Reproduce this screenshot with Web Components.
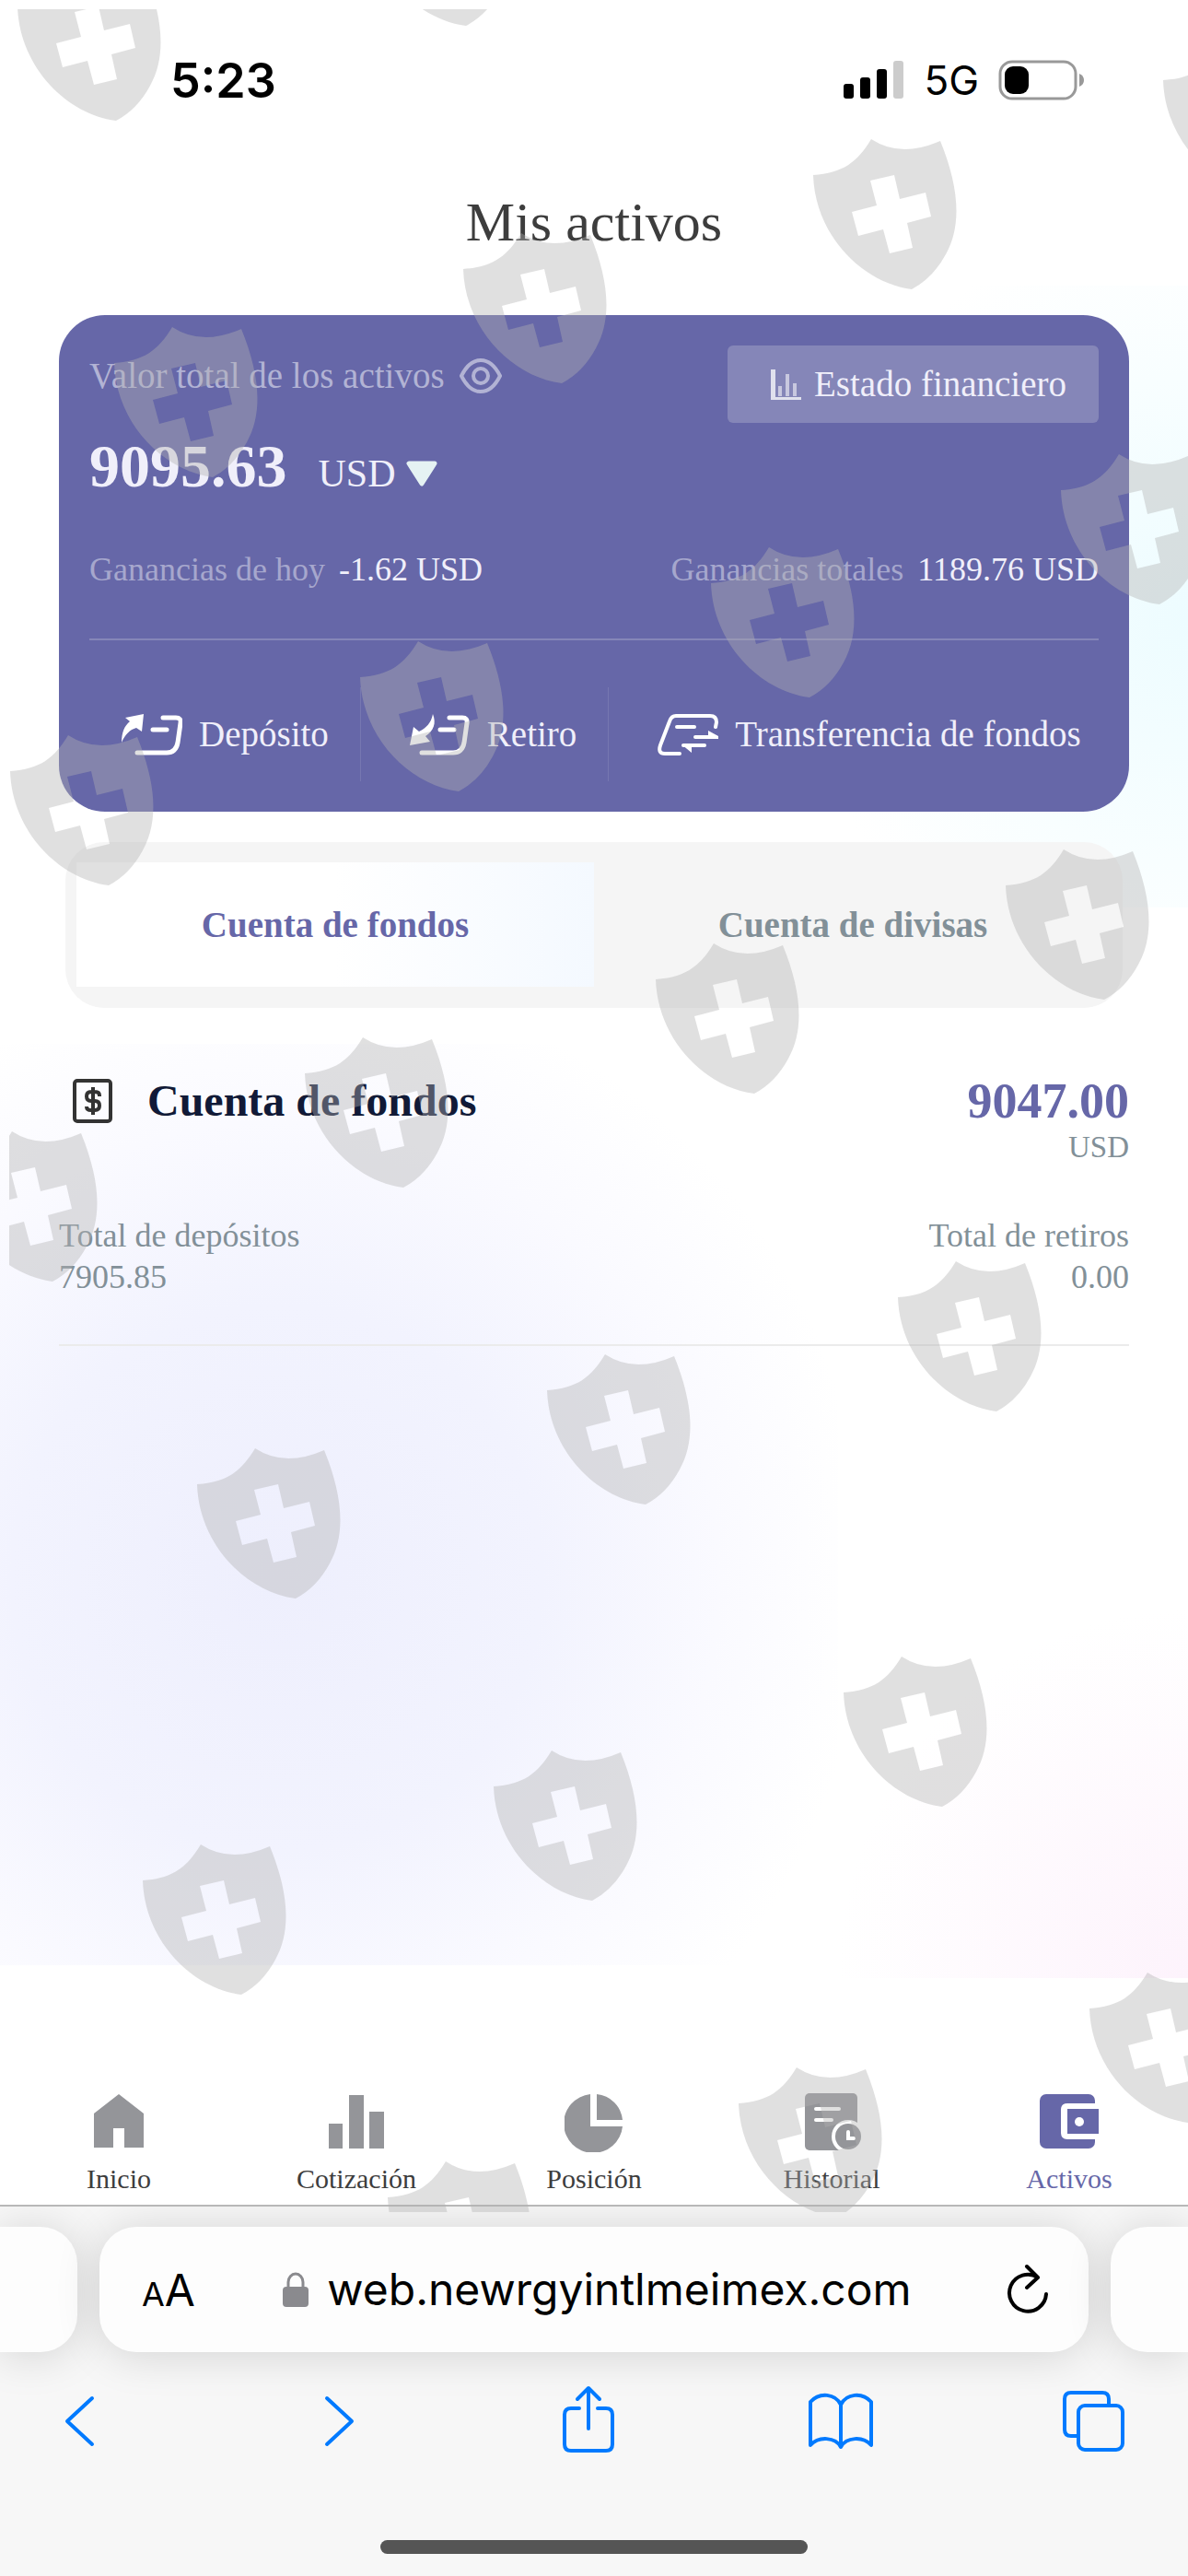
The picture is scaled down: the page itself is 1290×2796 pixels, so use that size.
<!DOCTYPE html>
<html lang="es">
<head>
<meta charset="utf-8">
<meta name="viewport" content="width=device-width, initial-scale=1">
<title>Mis activos</title>
<style>
  body {
    margin: 0;
    font-family: "Liberation Serif", "Times New Roman", serif;
    color: #3d3d3d;
    background: #fff;
  }
</style>
</head>
<body>
<wallet-page>
  <status-bar slot="top" time="5:23" network="5G"></status-bar>
  <page-title slot="top">Mis activos</page-title>

  <asset-card amount="9095.63" currency="USD">
    <span slot="label">Valor total de los activos</span>
    <span slot="report">Estado financiero</span>
    <profit-item slot="profit" label="Ganancias de hoy">-1.62 USD</profit-item>
    <profit-item slot="profit" label="Ganancias totales">1189.76 USD</profit-item>
    <card-action slot="action" icon="deposit">Depósito</card-action>
    <card-action slot="action" icon="withdraw">Retiro</card-action>
    <card-action slot="action" icon="transfer">Transferencia de fondos</card-action>
  </asset-card>

  <account-tabs>
    <account-tab active>Cuenta de fondos</account-tab>
    <account-tab>Cuenta de divisas</account-tab>
  </account-tabs>

  <account-summary amount="9047.00" currency="USD">
    <span slot="name">Cuenta de fondos</span>
    <total-item label="Total de depósitos">7905.85</total-item>
    <total-item label="Total de retiros" align="right">0.00</total-item>
  </account-summary>

  <app-nav slot="bottom">
    <nav-item icon="home">Inicio</nav-item>
    <nav-item icon="bars">Cotización</nav-item>
    <nav-item icon="pie">Posición</nav-item>
    <nav-item icon="history">Historial</nav-item>
    <nav-item icon="wallet" active>Activos</nav-item>
  </app-nav>
  <browser-bar slot="bottom" address="web.newrgyintlmeimex.com">
    <browser-tool icon="back" label="Atrás"></browser-tool>
    <browser-tool icon="forward" label="Adelante"></browser-tool>
    <browser-tool icon="share" label="Compartir"></browser-tool>
    <browser-tool icon="book" label="Marcadores"></browser-tool>
    <browser-tool icon="tabs" label="Pestañas"></browser-tool>
  </browser-bar>
</wallet-page>

<script>
const svg = (width, height, body) =>
  `<svg width="${width}" height="${height}" viewBox="0 0 ${width} ${height}" fill="none" aria-hidden="true">${body}</svg>`;

const tool = (body) =>
  svg(72, 76, `<g stroke="currentColor" stroke-width="4" stroke-linecap="round" stroke-linejoin="round">${body}</g>`);

const icons = {
  deposit: svg(66, 45, `
    <path d="M24 0L4 4l5 4C3 13 0 20 0 31c4-9 9-14 16-16l6 4z" fill="#fff"/>
    <path d="M45 4h14q6 0 5 6l-3 21q-2 11-12 11H17M34 17h15" stroke="#fff" stroke-width="5" stroke-linecap="round"/>`),
  withdraw: svg(66, 45, `
    <path d="M25 0c4 10 1 18-8 24l5 6-22 4 4-20 6 5c8-4 13-9 15-19z" fill="#fff"/>
    <path d="M43 4h14q6 0 5 6l-3 21q-2 11-12 11H13M33 17h15" stroke="#fff" stroke-width="5" stroke-linecap="round"/>`),
  transfer: svg(66, 45, `
    <path d="M63 14l1-5q0-7-7-7H20q-5 0-7 6L3 34q-3 9 5 9h16M21 14h19" stroke="#fff" stroke-width="4" stroke-linecap="round"/>
    <path d="M41 25h22M51 34H28" stroke="#fff" stroke-width="4" stroke-linecap="round"/>
    <path d="M55 18l11 6v3H55zM26 33h11v9z" fill="#fff"/>`),
  eye: svg(46, 38, `
    <path d="M2 19C7 9 14 2 23 2s16 7 21 17c-5 10-12 17-21 17S7 29 2 19z" stroke="currentColor" stroke-width="4"/>
    <circle cx="23" cy="19" r="8" stroke="currentColor" stroke-width="4"/>`),
  report: svg(33, 33, `
    <path d="M0 0h5v30h28v3H0z" fill="#fff" opacity=".75"/>
    <path d="M10 18v11M18 5v24M26 15v14" stroke="#fff" stroke-width="4" opacity=".55"/>`),
  money: svg(43, 48, `
    <rect x="2" y="2" width="39" height="44" rx="3" stroke="#333" stroke-width="4"/>
    <path d="M29 19v-1q0-4-5-4h-4q-5 0-5 5t5 5h4q5 0 5 5t-5 5h-4q-5 0-5-4M22 9v30" stroke="#333" stroke-width="4"/>`),
  home: svg(64, 64, `<path d="M32 1l27 21v37H38V38H26v21H5V22z" fill="currentColor"/>`),
  bars: svg(64, 64, `<path d="M2 33h15v27H2zM24 2h16v58H24zM46 20h16v40H46z" fill="currentColor"/>`),
  pie: svg(64, 64, `<path d="M28 1a32 32 0 1 0 35 35H28zM35 1v28h28A31 31 0 0 0 35 1z" fill="currentColor"/>`),
  history: svg(64, 64, `
    <rect x="3" width="57" height="62" rx="5" fill="currentColor"/>
    <circle cx="50" cy="47" r="18" fill="#fff"/>
    <circle cx="50" cy="47" r="14" fill="currentColor"/>
    <path d="M15 17h25M15 29h17M50 42v7h6" stroke="#fff" stroke-width="4" stroke-linecap="round"/>`),
  wallet: svg(64, 64, `
    <rect y="1" width="60" height="59" rx="7" fill="currentColor"/>
    <path d="M64 11H30q-7 0-7 7v25q0 7 7 7h34z" fill="#fff"/>
    <path d="M30 17h34v27H30z" fill="currentColor"/>
    <circle cx="43" cy="31" r="5" fill="#fff"/>`),
  back: tool(`<path d="M46 15L19 40l27 25"/>`),
  forward: tool(`<path d="M27 15l27 25-27 25"/>`),
  share: tool(`<path d="M27 26h-9q-7 0-7 7v32q0 7 7 7h38q7 0 7-7V33q0-7-7-7h-9M37 5v43M25 16L37 4l12 12"/>`),
  book: tool(`<path d="M37 22C31 10 14 8 4 19v47c9-10 27-9 33 2 6-11 24-12 33-2V19C60 8 43 10 37 22v46"/>`),
  tabs: tool(`<path d="M19 56h-6q-7 0-7-7V16q0-7 7-7h34q7 0 7 7v7"/><rect x="21" y="23" width="48" height="48" rx="7"/>`),
  reload: svg(46, 56, `<path d="M43 33A20 20 0 1 1 34 15M22 3l12 12-12 11" stroke="#000" stroke-width="4" stroke-linecap="round" stroke-linejoin="round"/>`),
  lock: svg(28, 38, `<rect y="16" width="28" height="22" rx="4" fill="#8a8a8e"/><path d="M6 17v-6a8 9 0 0 1 16 0v6" stroke="#8a8a8e" stroke-width="3"/>`),
};

// every component renders its markup once, from its attributes
class BaseElement extends HTMLElement {
  constructor() {
    super();
    this.attachShadow({ mode: "open" });
  }

  connectedCallback() {
    const template = document.createElement("template");
    template.innerHTML = `<style>* { box-sizing: border-box; } ${this.styles()}</style>${this.render()}`;
    this.shadowRoot.replaceChildren(template.content.cloneNode(true));
  }

  attr(name) {
    return this.getAttribute(name) || "";
  }
}

//

class WalletPage extends BaseElement {
  styles() {
    return `
      :host {
        position: relative;
        display: flex;
        flex-direction: column;
        min-height: 100vh;
        overflow: hidden;
        background:
          radial-gradient(420px 440px at 100% 54%, #edfcff, #f8feff 60%, #fff0) right 310px / 420px 675px no-repeat,
          radial-gradient(640px 660px at 33% 58%, #eeeffd, #f2f3fe 45%, #fafaff 75%, #fff0) 0 1133px / 910px 1000px no-repeat,
          radial-gradient(380px 400px at 100% 100%, #fdf3fc, #fff0) right 1647px / 460px 500px no-repeat,
          #fff;
      }
      main {
        flex: 1;
        padding: 0 64px;
      }
    `;
  }

  render() {
    return `
      <slot name="top"></slot>
      <main><slot></slot></main>
      <slot name="bottom"></slot>
      <shield-layer></shield-layer>
    `;
  }
}

class ShieldLayer extends BaseElement {
  styles() {
    return `
      :host {
        position: absolute;
        inset: 10px 0 395px 10px;
        overflow: hidden;
        pointer-events: none;
      }
      svg {
        display: block;
        width: 100%;
        height: 100%;
      }
    `;
  }

  render() {
    // left corner of each shield
    const spots = [
      [9, -3], [389, -106], [1253, 77], [873, 180], [493, 282], [114, 384],
      [1142, 522], [762, 623], [381, 725], [1, 827],
      [1082, 951], [702, 1053], [321, 1155], [-60, 1257],
      [965, 1398], [584, 1499], [204, 1601],
      [906, 1827], [526, 1929], [145, 2031],
      [1173, 2170], [792, 2273], [411, 2375],
    ];
    const shields = spots.map(([x, y]) => `<use href="#shield" x="${x}" y="${y}"/>`).join("");
    return `
      <svg aria-hidden="true">
        <defs>
          <path id="shield" fill-rule="evenodd" d="M0 0C32-2 48-14 63-39Q95-18 138-37C158 12 162 54 144 86Q130 112 107 124C53 117 2 65 0 0zM62 6L88 0 94 26 122 19 128 45 102 52 108 79 83 85 76 59 49 66 42 40 69 33z"/>
        </defs>
        <g fill="#b2b2b2" fill-opacity=".4">${shields}</g>
      </svg>
    `;
  }
}

class StatusBar extends BaseElement {
  styles() {
    return `
      :host {
        display: flex;
        justify-content: space-between;
        align-items: center;
        height: 174px;
        padding: 0 112px 0 185px;
        font-family: Inter, sans-serif;
        color: #000;
      }
      .time {
        font-size: 52px;
        font-weight: 600;
      }
      .signals {
        display: flex;
        align-items: center;
        gap: 21px;
        font-size: 44px;
      }
    `;
  }

  render() {
    return `
      <span class="time">${this.attr("time")}</span>
      <div class="signals">
        ${svg(66, 42, `
          <rect y="25" width="11" height="16" rx="3" fill="#000"/>
          <rect x="18" y="18" width="11" height="23" rx="3" fill="#000"/>
          <rect x="36" y="9" width="11" height="32" rx="3" fill="#000"/>
          <rect x="54" width="11" height="41" rx="3" fill="#ccc"/>`)}
        <span>${this.attr("network")}</span>
        ${svg(94, 44, `
          <rect x="2" y="2" width="82" height="40" rx="13" stroke="#999" stroke-width="3"/>
          <rect x="7" y="7" width="26" height="30" rx="9" fill="#000"/>
          <path d="M88 15q5 2 5 7t-5 7z" fill="#999"/>`)}
      </div>
    `;
  }
}

class PageTitle extends BaseElement {
  styles() {
    return `
      :host { display: block; }
      h1 {
        margin: 33px 0 67px;
        font-size: 60px;
        font-weight: 400;
        line-height: 68px;
        text-align: center;
      }
    `;
  }

  render() {
    return `<h1><slot></slot></h1>`;
  }
}

//

class AssetCard extends BaseElement {
  styles() {
    return `
      :host {
        display: block;
        padding: 33px;
        border-radius: 50px;
        background: #6667a8;
        color: #f0effa;
        font-size: 39px;
        line-height: 48px;
      }
      button, select {
        margin: 0;
        padding: 0;
        border: 0;
        background: none;
        color: inherit;
        font: inherit;
      }
      .head, .label, .report, .amount, .currency, .profits, .actions {
        display: flex;
      }
      .head, .profits {
        justify-content: space-between;
      }
      .head {
        align-items: flex-start;
      }
      .label {
        align-items: center;
        gap: 16px;
        margin-top: 9px;
        color: #b2b3d4;
      }
      .label svg {
        display: block;
      }
      .report {
        align-items: center;
        gap: 14px;
        height: 84px;
        padding: 0 35px 0 47px;
        border-radius: 6px;
        background: #8586b8;
      }
      .amount {
        align-items: baseline;
        gap: 34px;
        margin-top: 9px;
        line-height: 76px;
      }
      .amount strong {
        font-size: 66px;
      }
      .currency {
        align-items: center;
        gap: 10px;
      }
      .currency select {
        appearance: none;
        font-size: 42px;
        line-height: 48px;
      }
      .profits {
        margin-top: 52px;
      }
      hr {
        height: 2px;
        margin: 53px 0 51px;
        border: 0;
        background: #8586b8;
      }
    `;
  }

  render() {
    return `
      <div class="head">
        <div class="label">
          <slot name="label"></slot>
          <button aria-label="Mostrar u ocultar">${icons.eye}</button>
        </div>
        <button class="report">${icons.report}<slot name="report"></slot></button>
      </div>
      <div class="amount">
        <strong>${this.attr("amount")}</strong>
        <label class="currency">
          <select aria-label="Moneda"><option>${this.attr("currency")}</option></select>
          ${svg(34, 28, `<path d="M3 3h28L17 25z" fill="#e5f2f3" stroke="#e5f2f3" stroke-width="5" stroke-linejoin="round"/>`)}
        </label>
      </div>
      <div class="profits"><slot name="profit"></slot></div>
      <hr>
      <div class="actions"><slot name="action"></slot></div>
    `;
  }
}

class ProfitItem extends BaseElement {
  styles() {
    return `
      :host {
        display: flex;
        gap: 15px;
        font-size: 36px;
        line-height: 44px;
      }
      .label { color: #a6a7cd; }
    `;
  }

  render() {
    return `<span class="label">${this.attr("label")}</span><span><slot></slot></span>`;
  }
}

class CardAction extends BaseElement {
  styles() {
    return `
      :host {
        display: block;
        padding: 0 34px 0 53px;
        border-right: 1px solid #7677b1;
      }
      :host([icon="deposit"]) { padding-left: 35px; }
      :host([icon="transfer"]) {
        padding-right: 0;
        border-right: 0;
      }
      button {
        display: flex;
        align-items: center;
        gap: 18px;
        height: 102px;
        padding: 0;
        border: 0;
        background: none;
        color: inherit;
        font: inherit;
        white-space: nowrap;
      }
    `;
  }

  render() {
    return `<button>${icons[this.attr("icon")]}<slot></slot></button>`;
  }
}

//

class AccountTabs extends BaseElement {
  styles() {
    return `
      :host {
        display: grid;
        grid-template-columns: 1fr 1fr;
        margin: 33px 7px 0;
        padding: 22px 12px 23px;
        border-radius: 42px;
        background: #f5f5f5;
      }
    `;
  }

  render() {
    return `<slot></slot>`;
  }
}

class AccountTab extends BaseElement {
  styles() {
    return `
      :host { display: block; }
      button {
        width: 100%;
        height: 135px;
        padding: 0;
        border: 0;
        background: none;
        color: #829098;
        font: bold 39px/48px "Liberation Serif", serif;
      }
      :host([active]) button {
        background: linear-gradient(90deg, #fff 50%, #f4f9ff);
        color: #6667a8;
      }
    `;
  }

  render() {
    return `<button aria-pressed="${this.hasAttribute("active")}"><slot></slot></button>`;
  }
}

class AccountSummary extends BaseElement {
  styles() {
    return `
      :host {
        display: block;
        padding: 71px 0 50px;
        border-bottom: 2px solid #ebebeb;
      }
      .head, .name, .totals {
        display: flex;
      }
      .head, .totals {
        justify-content: space-between;
      }
      .name {
        align-items: center;
        gap: 38px;
        height: 60px;
        padding-left: 15px;
      }
      h2 {
        margin: 0;
        font-size: 48px;
        line-height: 56px;
        color: #111a37;
      }
      .amount {
        text-align: right;
        font-size: 33px;
        line-height: 40px;
        color: #829098;
      }
      strong {
        display: block;
        font-size: 54px;
        line-height: 60px;
        color: #6667a8;
      }
      .totals {
        margin-top: 54px;
      }
    `;
  }

  render() {
    return `
      <div class="head">
        <div class="name">${icons.money}<h2><slot name="name"></slot></h2></div>
        <div class="amount"><strong>${this.attr("amount")}</strong>${this.attr("currency")}</div>
      </div>
      <div class="totals"><slot></slot></div>
    `;
  }
}

class TotalItem extends BaseElement {
  styles() {
    return `
      :host {
        display: block;
        font-size: 36px;
        line-height: 45px;
        color: #829098;
      }
      :host([align="right"]) { text-align: right; }
    `;
  }

  render() {
    return `<div>${this.attr("label")}</div><div><slot></slot></div>`;
  }
}

//

class AppNav extends BaseElement {
  styles() {
    return `
      :host { display: block; }
      nav {
        display: grid;
        grid-template-columns: repeat(5, 1fr);
        padding-bottom: 10px;
      }
    `;
  }

  render() {
    return `<nav><slot></slot></nav>`;
  }
}

class NavItem extends BaseElement {
  styles() {
    return `
      :host { display: block; }
      a {
        display: flex;
        flex-direction: column;
        align-items: center;
        gap: 11px;
        color: #3d3d3d;
        font-size: 30px;
        line-height: 36px;
        text-decoration: none;
      }
      svg { color: #949599; }
      :host([active]) a, :host([active]) svg { color: #6667a8; }
    `;
  }

  render() {
    return `<a href="#${this.attr("icon")}">${icons[this.attr("icon")]}<span><slot></slot></span></a>`;
  }
}

class BrowserBar extends BaseElement {
  styles() {
    return `
      :host {
        display: block;
        padding: 22px 0 24px;
        border-top: 2px solid #b8b8b8;
        overflow: hidden;
        background: #f7f7f7;
        font-family: Inter, sans-serif;
        color: #000;
      }
      .pills {
        display: flex;
        gap: 24px;
      }
      .pill {
        height: 136px;
        background: #fdfdfd;
        box-shadow: 0 3px 48px rgba(0, 0, 0, 0.15);
      }
      .pill.previous {
        width: 84px;
        border-radius: 0 40px 40px 0;
      }
      .pill.next {
        width: 84px;
        border-radius: 40px 0 0 40px;
      }
      .pill.current {
        flex: 1;
        display: flex;
        justify-content: space-between;
        align-items: center;
        padding: 0 43px 0 46px;
        border-radius: 40px;
      }
      button, input {
        padding: 0;
        border: 0;
        background: none;
        color: inherit;
        font: inherit;
      }
      .size {
        display: flex;
        align-items: baseline;
        font-size: 48px;
      }
      .size small { font-size: 36px; }
      .address {
        display: flex;
        align-items: center;
        gap: 20px;
        margin-right: 8px;
      }
      .address input {
        field-sizing: content;
        font-size: 48px;
        line-height: 60px;
      }
      svg { display: block; }
      .tools {
        display: flex;
        justify-content: space-between;
        margin-top: 35px;
        padding: 0 68px 0 54px;
      }
      .home {
        width: 36%;
        height: 15px;
        margin: 93px auto 0;
        border-radius: 8px;
        background: #555;
      }
    `;
  }

  render() {
    return `
      <div class="pills">
        <div class="pill previous"></div>
        <div class="pill current">
          <button class="size" aria-label="Tamaño del texto"><small>A</small><span>A</span></button>
          <label class="address">${icons.lock}<input type="text" aria-label="Dirección" value="${this.attr("address")}"></label>
          <button aria-label="Recargar">${icons.reload}</button>
        </div>
        <div class="pill next"></div>
      </div>
      <div class="tools"><slot></slot></div>
      <div class="home"></div>
    `;
  }
}

class BrowserTool extends BaseElement {
  styles() {
    return `
      :host { display: block; }
      button {
        display: block;
        padding: 0;
        border: 0;
        background: none;
        color: #007aff;
      }
      svg { display: block; }
    `;
  }

  render() {
    return `<button aria-label="${this.attr("label")}">${icons[this.attr("icon")]}</button>`;
  }
}

customElements.define("shield-layer", ShieldLayer);
customElements.define("wallet-page", WalletPage);
customElements.define("status-bar", StatusBar);
customElements.define("page-title", PageTitle);
customElements.define("asset-card", AssetCard);
customElements.define("profit-item", ProfitItem);
customElements.define("card-action", CardAction);
customElements.define("account-tabs", AccountTabs);
customElements.define("account-tab", AccountTab);
customElements.define("account-summary", AccountSummary);
customElements.define("total-item", TotalItem);
customElements.define("app-nav", AppNav);
customElements.define("nav-item", NavItem);
customElements.define("browser-bar", BrowserBar);
customElements.define("browser-tool", BrowserTool);
</script>
</body>
</html>
